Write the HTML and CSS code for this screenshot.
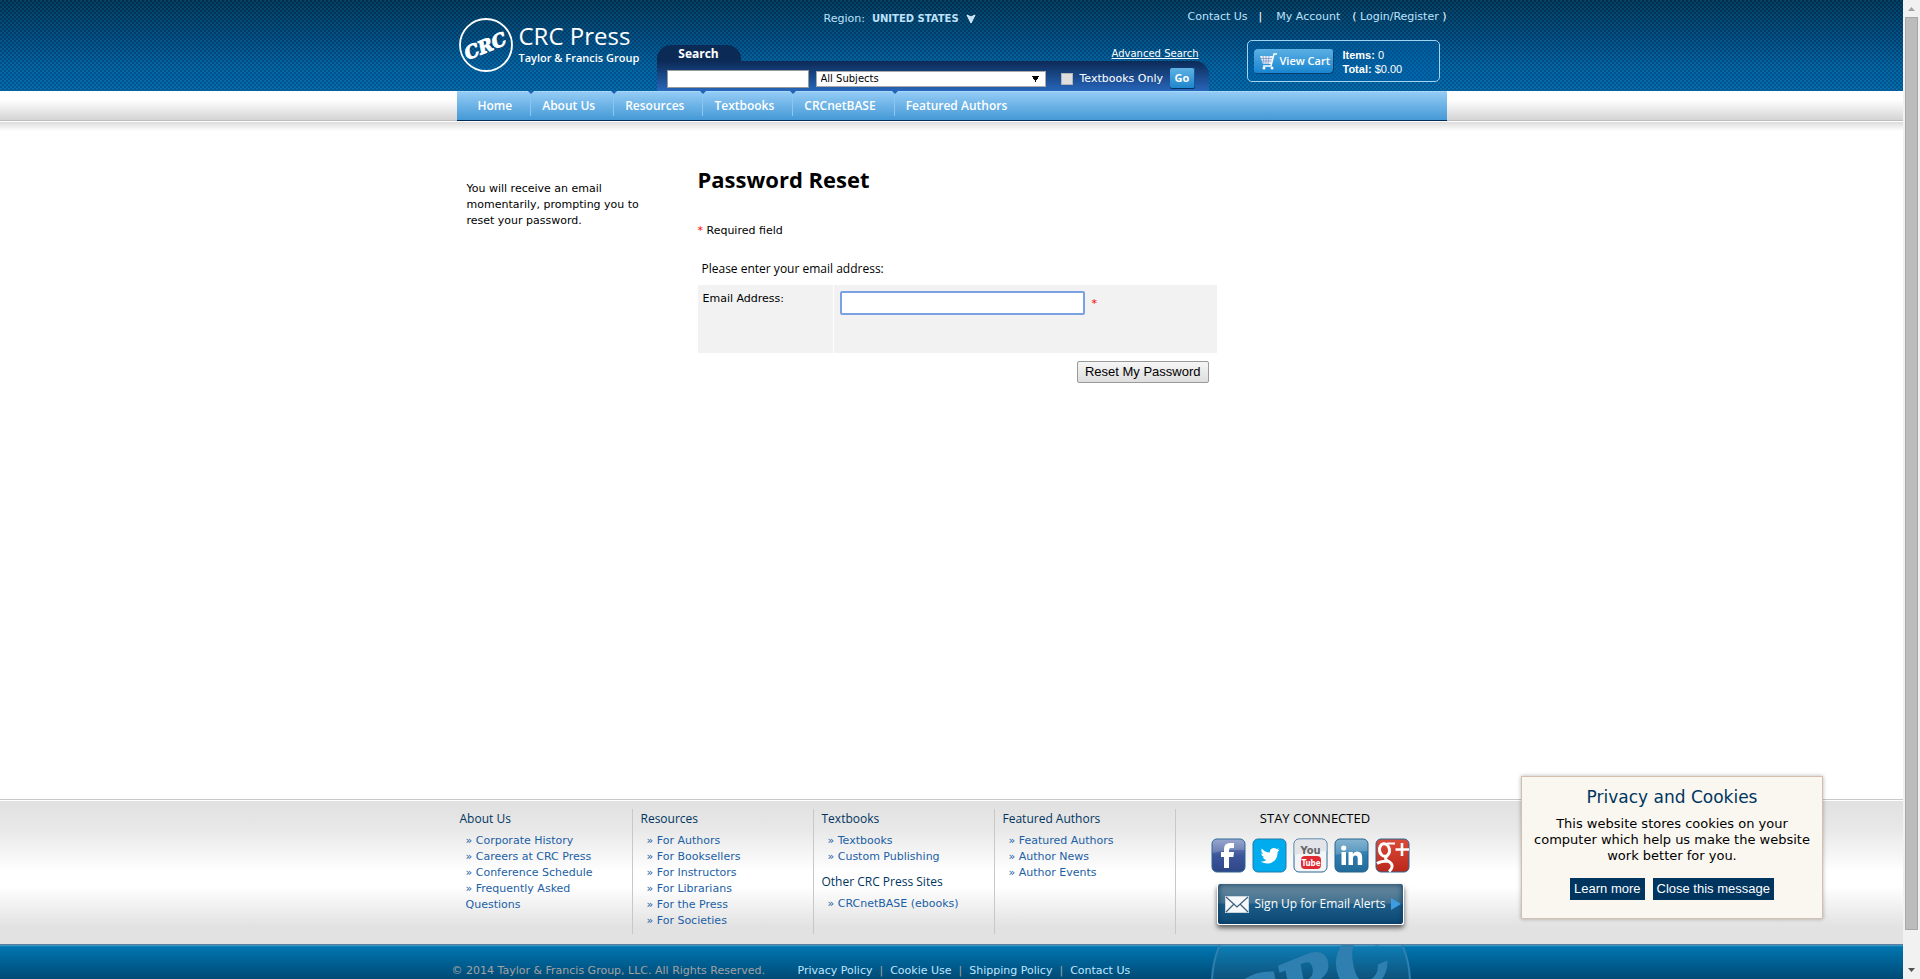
FILE: index.html
```html
<!DOCTYPE html>
<html lang="en">
<head>
<meta charset="utf-8">
<title>CRC Press - Password Reset</title>
<link rel="stylesheet" href="styles.css">
</head>
<body>
<div class="page">
  <header class="top">
    <div class="wrap top-inner">
      <a class="logo" href="#" aria-label="CRC Press home">
        <svg class="logo-mark" viewBox="0 0 56 56" aria-hidden="true">
          <circle cx="28" cy="28" r="26" fill="none" stroke="#fff" stroke-width="1.8"/>
          <text class="mark-text" x="27" y="35" transform="rotate(-22 28 28)" text-anchor="middle">CRC</text>
        </svg>
        <span class="logo-words"><span class="logo-name">CRC Press</span><span class="logo-sub">Taylor &amp; Francis Group</span></span>
      </a>
      <div class="top-mid">
        <a class="region" href="#"><span>Region:</span><b>UNITED STATES</b>
          <svg width="10" height="10" viewBox="0 0 10 10" aria-hidden="true"><path d="M1 1 5 3 9 1 5 9Z" fill="#bfe2fb" stroke="#e8f5ff"/></svg>
        </a>
        <form class="search">
          <div class="search-head"><label class="tab" for="q">Search</label><a class="advanced" href="#">Advanced Search</a></div>
          <div class="search-bar">
            <input class="query" id="q" type="text">
            <select class="subjects" aria-label="Subjects"><option>All Subjects</option></select>
            <label class="only"><input type="checkbox">Textbooks Only</label>
            <button class="go" type="button">Go</button>
          </div>
        </form>
      </div>
      <div class="top-right">
        <div class="account"><a href="#">Contact Us</a><span class="bar">|</span><a href="#">My Account</a><span class="paren">( <a href="#">Login/Register</a> )</span></div>
        <div class="cart">
          <a class="view-cart" href="#">
            <svg width="19" height="17" viewBox="0 0 19 17" aria-hidden="true"><path d="M1 3h13l-2 8H4Z" fill="#e9f0fa"/><path d="M4 3l1 8M7 3v8M10 3l-1 8M2 5.500h11M3 8h10" stroke="#8097c8" stroke-width=".8" fill="none"/><path d="M18 1h-3l-3 12H4" fill="none" stroke="#fff" stroke-width="1.400"/><circle cx="5" cy="15" r="1.500" fill="#fff"/><circle cx="13" cy="15" r="1.500" fill="#fff"/></svg>
            View Cart</a>
          <div class="totals"><div><b>Items:</b> 0</div><div><b>Total:</b> $0.00</div></div>
        </div>
      </div>
    </div>
  </header>
  <div class="nav-band">
    <nav class="wrap nav"><a href="#">Home</a><a href="#">About Us</a><a href="#">Resources</a><a href="#">Textbooks</a><a href="#">CRCnetBASE</a><a href="#">Featured Authors</a></nav>
  </div>
  <main class="main">
    <div class="wrap columns">
      <p class="note">You will receive an email momentarily, prompting you to reset your password.</p>
      <form class="reset">
        <h1>Password Reset</h1>
        <p class="required"><span class="star">*</span> Required field</p>
        <p class="prompt">Please enter your email address:</p>
        <div class="row">
          <label class="cell" for="email">Email Address:</label>
          <div class="cell field"><input id="email" type="text"><span class="star">*</span></div>
        </div>
        <div class="actions"><button class="submit" type="button">Reset My Password</button></div>
      </form>
    </div>
  </main>
  <footer>
    <div class="links-band">
      <div class="wrap links">
        <section><h2>About Us</h2><ul><li><a href="#">» Corporate History</a></li><li><a href="#">» Careers at CRC Press</a></li><li><a href="#">» Conference Schedule</a></li><li><a href="#">» Frequently Asked Questions</a></li></ul></section>
        <section><h2>Resources</h2><ul><li><a href="#">» For Authors</a></li><li><a href="#">» For Booksellers</a></li><li><a href="#">» For Instructors</a></li><li><a href="#">» For Librarians</a></li><li><a href="#">» For the Press</a></li><li><a href="#">» For Societies</a></li></ul></section>
        <section><h2>Textbooks</h2><ul><li><a href="#">» Textbooks</a></li><li><a href="#">» Custom Publishing</a></li></ul><h2>Other CRC Press Sites</h2><ul><li><a href="#">» CRCnetBASE (ebooks)</a></li></ul></section>
        <section><h2>Featured Authors</h2><ul><li><a href="#">» Featured Authors</a></li><li><a href="#">» Author News</a></li><li><a href="#">» Author Events</a></li></ul></section>
        <div class="social">
          <h2 class="stay">STAY CONNECTED</h2>
          <div class="icons">
            <a href="#" aria-label="Facebook"><svg viewBox="0 0 35 35"><defs><linearGradient id="fb" x2="0" y2="1"><stop stop-color="#8494c4"/><stop offset=".5" stop-color="#3d559b"/><stop offset="1" stop-color="#2f4686"/></linearGradient></defs><rect x="1" y="1" width="33" height="33" rx="5" fill="url(#fb)" stroke="#2b6795"/><path d="M1.500 15V6q0-4.500 4.500-4.500h23q4.500 0 4.500 4.500v6Q17 11 1.500 15Z" fill="#fff" opacity=".18"/><path d="M13 30V19h-3v-5h3v-3q0-6 6-6h4v5h-3q-2 0-2 2v2h5l-.6 5H18v11Z" fill="#fff"/></svg></a>
            <a href="#" aria-label="Twitter"><svg viewBox="0 0 35 35"><rect x="1" y="1" width="33" height="33" rx="5" fill="#00aced" stroke="#2179a8"/><path d="M27.500 11.500q-1 .6-2.200.7 1.200-.8 1.600-2-1.200.7-2.400.9a4 4 0 0 0-6.700 3.500q-4.900-.2-7.900-4.100-1.700 3.200 1.200 5.200-1 0-1.800-.5 0 3 3.100 3.900-.8.3-1.700.1.900 2.400 3.600 2.700-2.600 2-5.700 1.600 5 3 10.300 1.400 6.900-2.600 6.700-10.900 1.200-1 1.900-2.500Z" fill="#fff"/></svg></a>
            <a href="#" aria-label="YouTube"><svg viewBox="0 0 35 35"><rect x="1" y="1" width="33" height="33" rx="5" fill="#f3f4f6" stroke="#2b6795"/><path d="M1.500 17V6q0-4.500 4.500-4.500h23q4.500 0 4.500 4.500v7Q17 13 1.500 17Z" fill="#e2e4e8"/><text class="yt-you" x="17.500" y="16" text-anchor="middle">You</text><rect x="8" y="18" width="20" height="13" rx="4" fill="#e02a33"/><text class="yt-tube" x="18" y="28" text-anchor="middle">Tube</text></svg></a>
            <a href="#" aria-label="LinkedIn"><svg viewBox="0 0 35 35"><defs><linearGradient id="li" x2="0" y2="1"><stop stop-color="#6ba3c6"/><stop offset=".5" stop-color="#2c7cae"/><stop offset="1" stop-color="#226b9b"/></linearGradient></defs><rect x="1" y="1" width="33" height="33" rx="5" fill="url(#li)" stroke="#23628f"/><path d="M1.500 17V6q0-4.500 4.500-4.500h23q4.500 0 4.500 4.500v7Q17 13 1.500 17Z" fill="#fff" opacity=".18"/><path d="M7.500 14h4.500v13H7.500ZM14.500 14h4.300v2q1.500-2.400 4.400-2.400 5 0 5 6V27h-4.500v-6.500q0-3-2.200-3-2.500 0-2.500 3V27h-4.500Z" fill="#fff"/><circle cx="9.700" cy="10" r="2.600" fill="#fff"/></svg></a>
            <a href="#" aria-label="Google Plus"><svg viewBox="0 0 35 35"><defs><linearGradient id="gp" x2="0" y2="1"><stop stop-color="#dc4a38"/><stop offset="1" stop-color="#b9281a"/></linearGradient></defs><rect x="1" y="1" width="33" height="33" rx="5" fill="url(#gp)" stroke="#2b6795"/><path d="M20 5.500h-8" stroke="#fff" stroke-width="2"/><ellipse cx="9.500" cy="12" rx="5" ry="6.300" transform="rotate(-10 9.500 12)" fill="none" stroke="#fff" stroke-width="3"/><path d="M12 18q-3 2 0 4.500 6 3 5 6.500-.5 2.500-3 4.500M2 25.500q4-2.500 11-2.500" fill="none" stroke="#fff" stroke-width="3"/><path d="M27 5v13M20.500 11.500H34" stroke="#fff" stroke-width="2.600"/></svg></a>
          </div>
          <a class="alerts" href="#">
            <svg width="24" height="17" viewBox="0 0 24 17" aria-hidden="true"><rect x=".5" y=".5" width="23" height="16" fill="#f6f8fa" stroke="#c9d5df"/><path d="M1 1l11 10L23 1M1 16l8-8M23 16l-8-8" fill="none" stroke="#3b5f7c" stroke-width="1.200"/></svg>
            <span>Sign Up for Email Alerts</span>
            <svg width="10" height="12" viewBox="0 0 10 12" aria-hidden="true"><path d="M0 0l10 6-10 6Z" fill="#3f9ce0"/></svg>
          </a>
        </div>
      </div>
    </div>
    <div class="legal-band">
      <div class="wrap legal">
        <svg class="watermark" viewBox="0 0 200 200" aria-hidden="true"><circle cx="100" cy="38" r="99" fill="#fff" fill-opacity=".05" stroke="#2f80b0" stroke-width="2"/><text class="water-text" x="98" y="62" transform="rotate(-22 100 38)" text-anchor="middle">CRC</text></svg>
        <span class="copy">© 2014 Taylor &amp; Francis Group, LLC. All Rights Reserved.</span>
        <span class="legal-links"><a href="#">Privacy Policy</a><span>|</span><a href="#">Cookie Use</a><span>|</span><a href="#">Shipping Policy</a><span>|</span><a href="#">Contact Us</a></span>
      </div>
    </div>
  </footer>
</div>
<div class="scrollbar" aria-hidden="true">
  <svg width="17" height="17" viewBox="0 0 17 17"><path d="M5 11l3.500-4 3.500 4Z" fill="#a3a3a3"/></svg>
  <div class="track"><div class="thumb"></div></div>
  <svg width="17" height="17" viewBox="0 0 17 17"><path d="M5 6l3.500 4L12 6Z" fill="#505050"/></svg>
</div>
<aside class="cookies">
  <h2>Privacy and Cookies</h2>
  <p>This website stores cookies on your computer which help us make the website work better for you.</p>
  <div class="cookie-actions"><button type="button">Learn more</button><button type="button">Close this message</button></div>
</aside>
</body>
</html>
```
FILE: styles.css
```css
* { box-sizing: border-box; }
body {
  margin: 0;
  height: 100vh;
  display: flex;
  overflow: hidden;
  background: #fff;
  color: #000;
  font: 11px/16px "DejaVu Sans", Verdana, sans-serif;
}
a { text-decoration: none; color: inherit; }
h1, h2, p, ul { margin: 0; padding: 0; font-weight: normal; }
ul { list-style: none; }
button, input, select { font: inherit; margin: 0; }
svg { display: block; }

.page { flex: 1; min-width: 0; display: flex; flex-direction: column; }
.wrap { width: 100%; max-width: 990px; margin: 0 auto; }

/* Header */
.top {
  background:
    repeating-conic-gradient(rgba(0, 20, 60, .22) 0 25%, rgba(0, 150, 190, .15) 0 50%) 0 0 / 4px 4px,
    linear-gradient(#033452, #04487a 40%, #0360a0 75%, #0466a8);
}
.top-inner { display: flex; height: 91px; }
.logo { flex: none; width: 200px; display: flex; gap: 5px; padding: 17px 0 0 1px; color: #fff; }
.logo-mark { width: 56px; height: 56px; flex: none; }
.mark-text { font: italic bold 18px "DejaVu Serif", serif; fill: #fff; stroke: #fff; stroke-width: 1px; }
.logo-words { display: flex; flex-direction: column; padding-top: 4px; font-family: "Open Sans", sans-serif; white-space: nowrap; }
.logo-name { font-size: 24px; line-height: 30px; }
.logo-sub { font-size: 11px; line-height: 14px; font-weight: 600; }
.top-mid { flex: none; width: 552px; display: flex; flex-direction: column; justify-content: space-between; }
.region { display: flex; align-items: center; gap: 7px; padding: 11px 0 0 167px; color: #bfe2fb; }
.region b { font-size: 10px; }
.search-head { display: flex; justify-content: space-between; align-items: flex-end; }
.tab {
  width: 84px; height: 16px; border-radius: 14px 14px 0 0; background: #0c2a56; color: #fff;
  text-align: center; font: bold 12px/18px "Open Sans", sans-serif;
}
.advanced { color: #fff; text-decoration: underline; font-size: 10px; line-height: 15px; padding-right: 10px; }
.search-bar {
  height: 30px; display: flex; align-items: center; padding: 5px 14px 0 10px;
  background: linear-gradient(#0c2a56, #2766bb); border-radius: 0 14px 0 0; color: #fff;
}
.query { width: 142px; height: 18px; border: 1px solid #999; background: #fff; margin-right: 7px; }
.subjects {
  appearance: none; width: 230px; height: 16px; border: 1px solid #a9a9a9; padding: 0 4px; color: #000; font-size: 10px; line-height: 14px;
  background: conic-gradient(from -30deg at 50% 100%, #000 60deg, transparent 0) right 6px center / 7px 6px no-repeat, #fff;
  margin-right: 15px;
}
.only { display: flex; align-items: center; gap: 7px; margin-right: auto; white-space: nowrap; }
.only input { appearance: none; width: 12px; height: 12px; background: #dedede; border: 1px solid #b5b5b5; }
.go {
  width: 25px; height: 21px; padding: 0 0 2px; border: 0; border-radius: 2px; color: #fff;
  background: linear-gradient(#5fb2e4, #1c83cb); box-shadow: inset 0 -1px #06335e, inset -1px 0 #0b5b9c; font: bold 11px/18px "Open Sans", sans-serif;
}
.top-right { flex: 1; min-width: 0; display: flex; flex-direction: column; align-items: flex-end; padding-top: 9px; }
.account { display: flex; color: #bfe2fb; line-height: 16px; white-space: nowrap; }
.bar { color: #fff; padding: 0 14px 0 11px; }
.paren { padding-left: 12px; color: #fff; }
.paren a { color: #bfe2fb; }
.cart {
  width: 193px; height: 42px; margin: 15px 7px 0 0; display: flex; align-items: center; gap: 9px; padding-left: 6px;
  border: 1px solid #9fd3f2; border-radius: 5px; background: rgba(0, 100, 175, .4);
  font: 11px/14px "Liberation Sans", Arial, sans-serif; color: #fff;
}
.view-cart {
  width: 80px; height: 25px; display: flex; align-items: center; gap: 2px; padding-left: 5px; border-radius: 4px; white-space: nowrap;
  background: linear-gradient(#5cb0e3, #1583cf); box-shadow: inset -1px -1px #07406f; font: 600 11px/20px "Open Sans", sans-serif;
}
.totals { padding-top: 1px; }

/* Navigation */
.nav-band { background: linear-gradient(#fff 30%, #d4d4d4); border-bottom: 1px solid #bdbdbd; }
.nav {
  display: flex; height: 30px; padding-left: 21px; border-bottom: 1px solid #002c5a; border-top: 1px solid #a5d8f9; margin-bottom: -1px;
  background: linear-gradient(#93cbf5, #4499d6);
}
.nav a {
  display: block; position: relative; padding: 0 19px 0 11px; color: #fff; font: 600 12px/28px "Open Sans", sans-serif;
}
.nav a:first-child { padding-left: 0; }
.nav a + a::before {
  content: ""; position: absolute; left: -1px; top: 0; width: 1px; height: 24px; background: #8ac6f0;
}
.nav a + a::after {
  content: ""; position: absolute; left: -3px; top: -1px; border: 3px solid transparent; border-top-color: #1f63b4; border-bottom: 0;
}

/* Content */
.main { flex: 1; background: linear-gradient(#dcdcdc, #fff 9px) 0 1px / 100% 10px no-repeat; }
.columns { display: grid; grid-template-columns: 230px 519px; column-gap: 11px; }
.note { padding: 60px 30px 0 10px; }
h1 { font: bold 22px/28px "Open Sans", sans-serif; padding-top: 44px; }
.required { padding-top: 30px; }
.star { color: red; }
.prompt { font: 12px/16px "Open Sans", sans-serif; padding: 22px 0 8px 4px; }
.row { display: grid; grid-template-columns: 135px 1fr; gap: 1px; }
.cell { min-height: 68px; padding: 6px 5px; background: #f2f2f2; }
.field { display: flex; align-items: flex-start; gap: 7px; padding: 6px; }
.field input { width: 245px; height: 24px; border: 2px solid #7aa2e3; border-radius: 2px; outline: 0; padding: 1px 4px; }
.field .star { line-height: 26px; }
.actions { display: flex; justify-content: flex-end; padding: 8px 8px 0 0; }
.submit {
  height: 22px; padding: 0 7px; border: 1px solid #999; border-radius: 2px; background: linear-gradient(#f6f6f6, #dedede);
  font: 13px/20px "Liberation Sans", Arial, sans-serif; color: #000;
}

/* Footer */
.links-band {
  border-top: 1px solid #c9c9c9; box-shadow: inset 0 1px #fff;
  background: linear-gradient(#e0e0e0, #e8e8e8 20%, #fff 50%, #fff 60%, #e2e2e2 88%);
}
.links { display: flex; height: 144px; padding: 9px 0 10px; }
.links section { width: 181px; padding: 1px 8px 0; border-right: 1px solid #c8c8c8; }
.links section:first-child { width: 176px; padding-left: 3px; }
.links h2 { font: 12px/18px "Open Sans", sans-serif; color: #003560; padding-bottom: 5px; }
.links ul { padding-left: 6px; color: #1b5fa5; }
.links ul + h2 { padding-top: 8px; }
.social { flex: 1; display: flex; flex-direction: column; align-items: center; padding-right: 2px; }
.links h2.stay { font: 13px/18px "Open Sans", sans-serif; color: #000; padding: 0 0 11px 10px; }
.icons { display: flex; gap: 6px; }
.icons svg { width: 35px; height: 35px; }
.yt-you { font: bold 11px "DejaVu Sans Condensed", sans-serif; fill: #666; }
.yt-tube { font: bold 8px "DejaVu Sans Condensed", sans-serif; fill: #fff; }
.alerts {
  width: 187px; height: 41px; margin-top: 11px; display: flex; align-items: center; gap: 6px; padding-left: 7px; color: #fff;
  border: 1px solid #fff; border-top: 0; border-radius: 3px; white-space: nowrap; font: 12px/20px "Open Sans", sans-serif;
  background: linear-gradient(#6b8a9f, #41718f 48%, #1c5c87 50%, #0d4a76); box-shadow: 0 3px 5px rgba(0, 0, 0, .6), inset 0 0 6px #08375c;
}
.legal-band {
  height: 35px; overflow: hidden; border-top: 1px solid #5b7f9c; background: linear-gradient(#4ba0cb, #0075b0 2px, #004a75);
}
.legal { position: relative; display: flex; padding-top: 18px; color: #a2a2a2; white-space: nowrap; }
.copy { margin-left: -5px; width: 346px; }
.legal-links { display: flex; gap: 7px; }
.legal-links a { color: #bfe6ff; }
.watermark { position: absolute; right: 36px; top: 0; width: 200px; height: 200px; }
.water-text { font: italic bold 70px "DejaVu Serif", serif; fill: #2f80b0; stroke: #2f80b0; stroke-width: 3px; }

/* Scrollbar */
.scrollbar { flex: 0 0 17px; display: flex; flex-direction: column; background: #f1f1f1; }
.track { flex: 1; padding: 0 2px 32px; display: flex; }
.thumb { flex: 1; border: 1px solid #a8a8a8; background: #bcbcbc; }

/* Cookie notice */
.cookies {
  position: absolute; right: 97px; bottom: 60px; width: 302px; padding: 10px 10px 18px; text-align: center;
  border: 1px solid #d3bfae; background: #faf7f0; box-shadow: 0 0 4px rgba(0, 0, 0, .3);
}
.cookies h2 { font-size: 17px; line-height: 20px; color: #00355f; padding-bottom: 9px; }
.cookies p { font-size: 13px; line-height: 16px; padding-bottom: 14px; margin: 0 -8px; }
.cookie-actions { display: flex; justify-content: center; gap: 8px; }
.cookies button {
  height: 22px; padding: 0 4px; border: 0; color: #fff; background: #00355f; font: 13px/20px "Liberation Sans", Arial, sans-serif;
}
```
